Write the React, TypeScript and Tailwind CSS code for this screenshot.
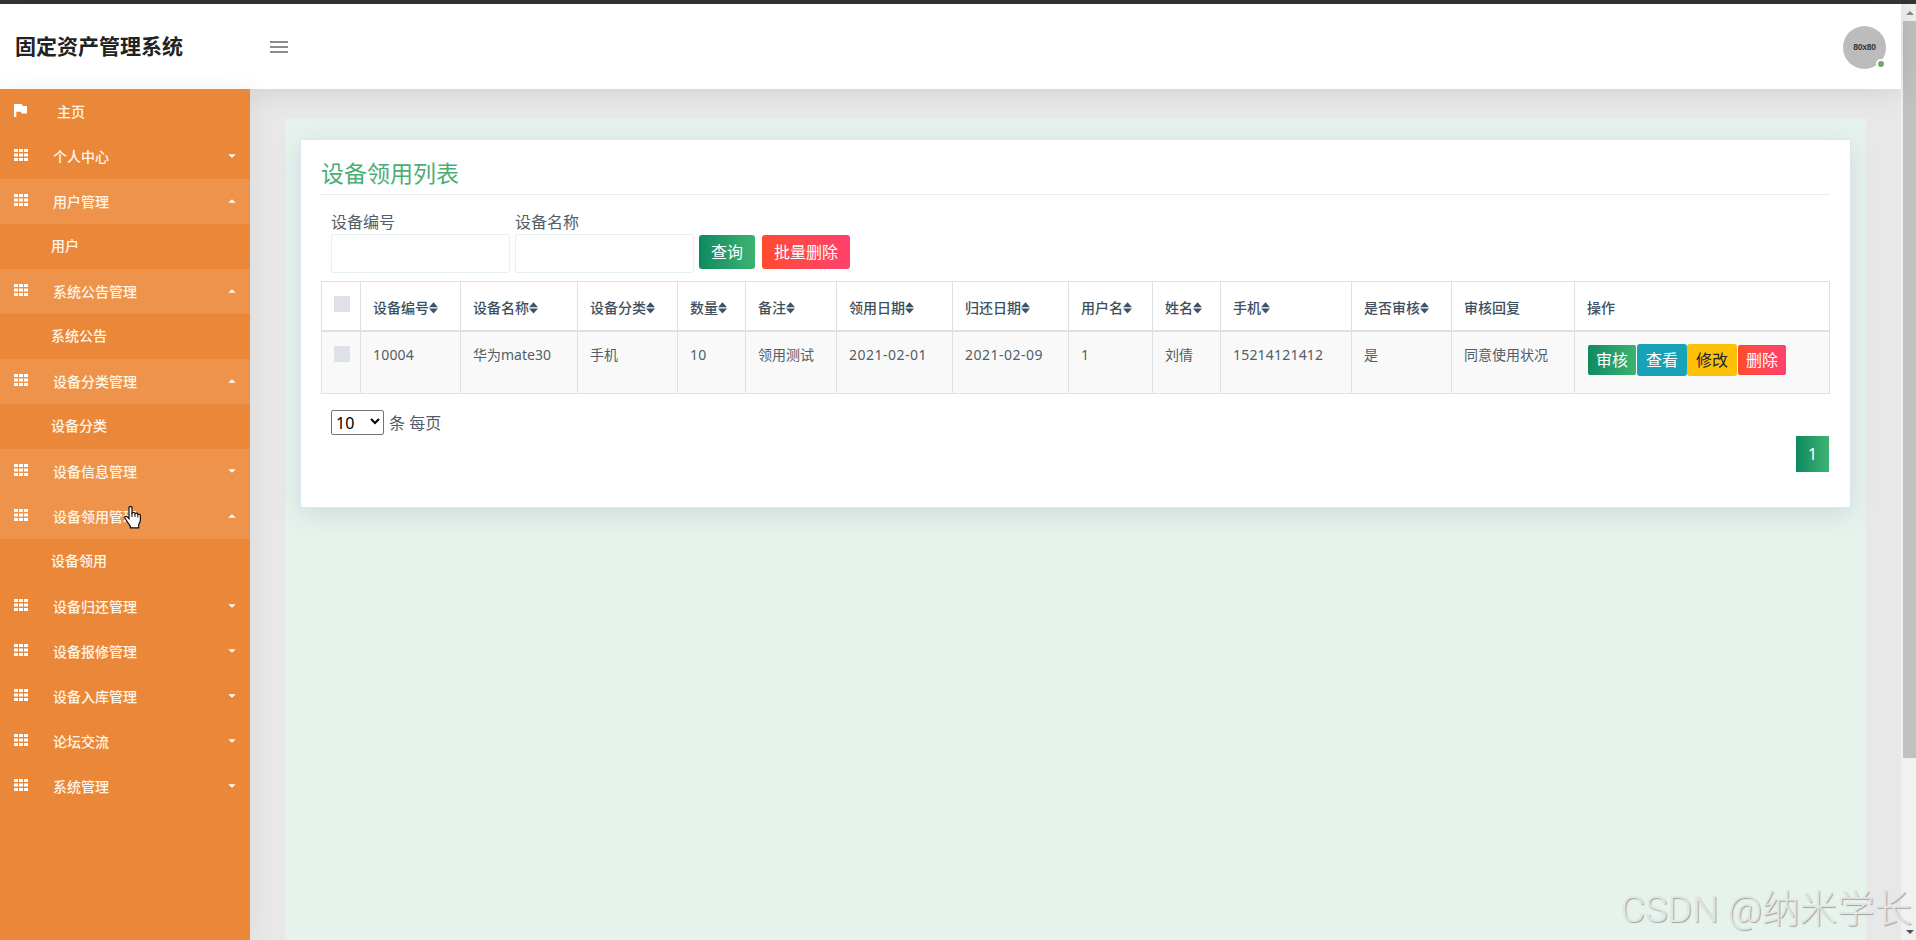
import React from "react";

type MenuItem = { label: string; open?: boolean; active?: boolean; child?: string };

const menu: MenuItem[] = [
  { label: "个人中心" },
  { label: "用户管理", open: true, active: true, child: "用户" },
  { label: "系统公告管理", open: true, active: true, child: "系统公告" },
  { label: "设备分类管理", open: true, active: true, child: "设备分类" },
  { label: "设备信息管理", active: true },
  { label: "设备领用管理", open: true, active: true, child: "设备领用" },
  { label: "设备归还管理" },
  { label: "设备报修管理" },
  { label: "设备入库管理" },
  { label: "论坛交流" },
  { label: "系统管理" },
];

type Column = { title: string; value: string; width: number; sortable: boolean };

const columns: Column[] = [
  { title: "设备编号", value: "10004", width: 100, sortable: true },
  { title: "设备名称", value: "华为mate30", width: 117, sortable: true },
  { title: "设备分类", value: "手机", width: 100, sortable: true },
  { title: "数量", value: "10", width: 68, sortable: true },
  { title: "备注", value: "领用测试", width: 91, sortable: true },
  { title: "领用日期", value: "2021-02-01", width: 116, sortable: true },
  { title: "归还日期", value: "2021-02-09", width: 116, sortable: true },
  { title: "用户名", value: "1", width: 84, sortable: true },
  { title: "姓名", value: "刘倩", width: 68, sortable: true },
  { title: "手机", value: "15214121412", width: 131, sortable: true },
  { title: "是否审核", value: "是", width: 100, sortable: true },
  { title: "审核回复", value: "同意使用状况", width: 123, sortable: false },
];

function FlagIcon() {
  return (
    <svg width="13" height="13" viewBox="0 0 13 13" fill="#fff" className="block">
      <path d="M0 0h8l.5 2H13v7.5H7.5L7 7.800H2.300V13H0z" />
    </svg>
  );
}

function GridIcon() {
  return (
    <svg width="14" height="12" viewBox="0 0 14 12" fill="#fff" className="block">
      {[0, 4.5, 9].map((y) =>
        [0, 5, 10].map((x) => <rect key={`${x}-${y}`} x={x} y={y} width="4" height="3" />)
      )}
    </svg>
  );
}

function Caret({ up }: { up?: boolean }) {
  return (
    <svg width="8" height="4" viewBox="0 0 8 4" fill="#fff" className="block">
      <path d={up ? "M.3 3.700L4 .3l3.700 3.400z" : "M.3.3h7.400L4 3.700z"} />
    </svg>
  );
}

function SortIcon() {
  return (
    <svg width="9" height="12" viewBox="0 0 9 12" fill="#3e5367" className="block shrink-0">
      <path d="M4.500.2L9 5.200H0zM0 6.600h9L4.500 11.600z" />
    </svg>
  );
}

function Sidebar() {
  return (
    <aside className="relative z-30 w-[250px] shrink-0 bg-[#eb8738] text-sm font-medium leading-[21px] text-[#fff6e8] shadow-[2px_0_24px_rgba(0,0,0,0.06)]">
      <div className="flex h-[45px] items-center pl-[14px]">
        <div className="w-[43px] pb-[3px]">
          <FlagIcon />
        </div>
        <span>主页</span>
      </div>
      {menu.map((item) => (
        <div key={item.label}>
          <div className={`flex h-[45px] items-center pl-[14px] pr-[14px] ${item.active ? "bg-[#ee934c]" : ""}`}>
            <div className="w-[39px] pb-[3px]">
              <GridIcon />
            </div>
            <span className="flex-1">{item.label}</span>
            <div className="pb-[2px]">
              <Caret up={item.open} />
            </div>
          </div>
          {item.child && <div className="flex h-[45px] items-center pb-[2px] pl-[51px]">{item.child}</div>}
        </div>
      ))}
    </aside>
  );
}

function Header() {
  return (
    <header className="relative z-20 flex h-[85px] shrink-0 items-center bg-white shadow-[0_0_30px_rgba(0,0,0,0.12)]">
      <h1 className="w-[270px] pb-[2px] pl-[15px] text-[21px] font-bold leading-8 text-[#222]">固定资产管理系统</h1>
      <div className="flex flex-col gap-[3px]">
        <span className="h-[2px] w-[18px] bg-[#8c8c8c]" />
        <span className="h-[2px] w-[18px] bg-[#8c8c8c]" />
        <span className="h-[2px] w-[18px] bg-[#8c8c8c]" />
      </div>
      <div className="relative ml-auto mr-[15px] mt-[2px] flex size-[43px] items-center justify-center rounded-full bg-[#bcbcbc] text-[8.500px] text-[#333]">
        <span className="font-['Liberation_Sans',sans-serif] font-bold tracking-[-0.2px]">80x80</span>
        <span className="absolute bottom-0 right-0 size-[10px] rounded-full border-2 border-white bg-[#70a870]" />
      </div>
    </header>
  );
}

function Scrollbar() {
  return (
    <div className="flex w-[15px] shrink-0 flex-col items-end bg-[#f1f1f1]">
      <div className="flex h-[17px] w-[13px] items-center justify-center">
        <svg width="8" height="4" viewBox="0 0 8 4" fill="#8b8b8b">
          <path d="M0 4L4 0l4 4z" />
        </svg>
      </div>
      <div className="h-[737px] w-[13px] bg-[#c1c1c1]" />
      <div className="mt-auto flex h-[17px] w-[13px] items-center justify-center">
        <svg width="8" height="4" viewBox="0 0 8 4" fill="#505050">
          <path d="M0 0h8L4 4z" />
        </svg>
      </div>
    </div>
  );
}

function DataTable() {
  return (
    <table className="mt-2 w-[1509px] table-fixed border-collapse text-sm leading-[21px] text-[#525d68]">
      <colgroup>
        <col style={{ width: 39 }} />
        {columns.map((c) => (
          <col key={c.title} style={{ width: c.width }} />
        ))}
        <col style={{ width: 255 }} />
      </colgroup>
      <thead>
        <tr className="h-[49px]">
          <th className="border border-b-2 border-[#dee0e6] p-0 align-top">
            <div className="ml-3 mt-[14px] size-4 bg-[#dee2e6]" />
          </th>
          {columns.map((c) => (
            <th key={c.title} className="border border-b-2 border-[#dee0e6] p-0 pl-3 text-left align-middle font-medium text-[#3e5060]">
              <div className="flex items-center whitespace-nowrap pt-1">
                {c.title}
                {c.sortable && <SortIcon />}
              </div>
            </th>
          ))}
          <th className="border border-b-2 border-[#dee0e6] p-0 pl-3 pt-1 text-left align-middle font-medium text-[#3e5060]">操作</th>
        </tr>
      </thead>
      <tbody>
        <tr className="h-[63px] bg-[#f9f9f9]">
          <td className="border border-[#dee0e6] p-0 align-top">
            <div className="ml-3 mt-[14px] size-4 bg-[#dee2e6]" />
          </td>
          {columns.map((c) => (
            <td
              key={c.title}
              className={`whitespace-nowrap border border-[#dee0e6] p-0 pl-3 pt-3 align-top ${
                c.value.includes("-") ? "tracking-[0.48px]" : /^\d+$/.test(c.value) ? "tracking-[0.2px]" : ""
              }`}
            >
              {c.value}
            </td>
          ))}
          <td className="border border-[#dee0e6] p-0 pl-[13px] pt-3 align-top text-base leading-6">
            <div className="flex items-center">
              <button className="mr-px h-[30px] w-12 rounded-[2px] bg-linear-to-r from-[#0b8a60] to-[#3cb371] text-white">审核</button>
              <button className="h-8 w-[50px] rounded-[3px] bg-[#17a2b8] text-white">查看</button>
              <button className="mr-px h-8 w-[50px] rounded-[3px] bg-[#ffc107] text-[#212529]">修改</button>
              <button className="h-[30px] w-12 rounded-[2px] bg-linear-to-r from-[#ff4b2b] to-[#ff416c] text-white">删除</button>
            </div>
          </td>
        </tr>
      </tbody>
    </table>
  );
}

function ListCard() {
  return (
    <section className="h-[369px] w-[1551px] rounded-[2px] border border-[#dce6ee] bg-white px-5 pt-[15px] shadow-[0_6px_24px_rgba(110,120,170,0.2)]">
      <h2 className="h-10 border-b border-[#e9ecef] text-[23px] leading-[36px] text-[#4aae76]">设备领用列表</h2>
      <div className="flex items-start pl-[10px] pt-[15px] text-[#525d68]">
        <label className="mr-[5px] w-[179px] leading-6">
          设备编号
          <input className="block h-[39px] w-full rounded-[2px] border border-[#e6f2ee] bg-white" />
        </label>
        <label className="mr-[5px] w-[179px] leading-6">
          设备名称
          <input className="block h-[39px] w-full rounded-[2px] border border-[#e6f2ee] bg-white" />
        </label>
        <button className="mr-[7px] mt-[25px] h-[34px] w-14 rounded-[3px] bg-linear-to-r from-[#0b8a60] to-[#3cb371] text-white">查询</button>
        <button className="mt-[25px] h-[34px] w-[88px] rounded-[3px] bg-linear-to-r from-[#ff4b2b] to-[#ff416c] text-white">批量删除</button>
      </div>
      <DataTable />
      <div className="mb-px flex h-[41px] items-end pl-[10px] text-[#525d68]">
        <div className="relative mr-[5px] h-[25px] w-[53px]">
          <select className="block h-full w-full appearance-none rounded-[2px] border border-[#767676] bg-white pl-1 leading-5 text-black">
            <option>10</option>
          </select>
          <svg width="10" height="7" viewBox="0 0 10 7" fill="none" stroke="#000" strokeWidth="2" className="pointer-events-none absolute right-1 top-[8px]">
            <path d="M1 1l4 4 4-4" />
          </svg>
        </div>
        <span className="leading-6">条 每页</span>
      </div>
      <div className="flex w-[1508px] justify-end">
        <button className="h-9 w-[33px] bg-linear-to-r from-[#0b8a60] to-[#3cb371] text-white">1</button>
      </div>
    </section>
  );
}

function HandCursor() {
  return (
    <svg width="18" height="23" viewBox="0 0 18 23" className="absolute left-[124px] top-[506px] z-40">
      <path
        d="M5 1.500c0-1.300 3-1.300 3 0V7c.5-.9 2.700-.7 3 .6.700-.9 2.500-.5 2.800.8 1-.7 2.600 0 2.600 1.400V14c0 2.500-1.700 3.500-1.700 5v2.800H6.300V20C5 18 3.500 16.500 2.500 14.500 1.800 13.200.4 11.800.7 10.900c.8-1.300 2.700-.3 4.300 1.700z"
        fill="#fff"
        stroke="#111"
        strokeWidth="1.200"
      />
      <path d="M8 7v4M11 8v3M13.800 9v2.500" stroke="#111" fill="none" />
    </svg>
  );
}

export default function App() {
  return (
    <div className="relative flex h-[940px] w-[1916px] flex-col overflow-hidden bg-[#e8e8e8] font-['Noto_Sans','Noto_Sans_CJK_SC',sans-serif] text-base">
      <div className="h-1 shrink-0 bg-[#353535]" />
      <div className="flex min-h-0 flex-1">
        <div className="flex min-w-0 flex-1 flex-col">
          <Header />
          <div className="flex min-h-0 flex-1">
            <Sidebar />
            <main className="ml-[35px] mr-[35px] mt-[30px] flex-1 bg-[#e6f3ec] pl-[15px] pt-5">
              <ListCard />
            </main>
          </div>
        </div>
        <Scrollbar />
      </div>
      <HandCursor />
      <div className="pointer-events-none absolute bottom-[3px] right-[4px] z-30 whitespace-nowrap font-[Roboto,'Noto_Sans_CJK_SC',sans-serif] text-[37.500px] font-light leading-[56px] text-[#e2e5e3] [text-shadow:1px_1px_1px_#a0a0a0]">
        CSDN @纳米学长
      </div>
    </div>
  );
}
